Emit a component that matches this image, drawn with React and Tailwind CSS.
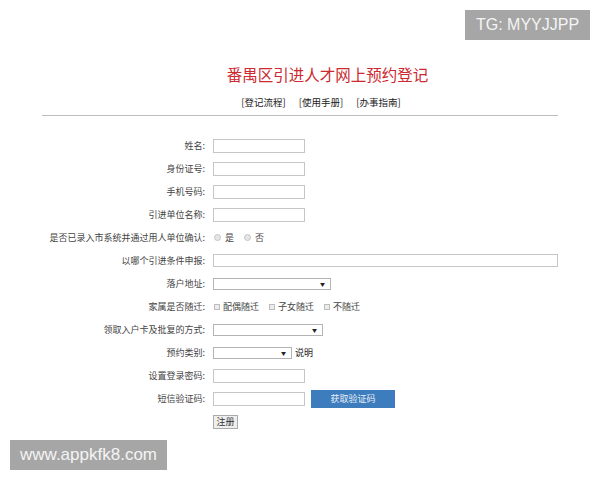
const FONT = { fontFamily: '"Noto Sans CJK SC", "Liberation Sans", sans-serif' };

function TextInput({ w = 'w-[92px]', h = 'h-[14px]' }) {
  return <div className={`${w} ${h} border border-[#c6c6c6] bg-white`} />;
}

function Select({ w }) {
  return (
    <div className={`${w} h-[12px] border border-[#b4b4b4] bg-white flex items-center justify-end pr-[5px]`}>
      <span className="text-[5px] leading-none text-[#222]">▼</span>
    </div>
  );
}

function Radio({ label }) {
  return (
    <div className="flex items-center">
      <span className="w-[7px] h-[7px] rounded-full border border-[#c4c4c4] bg-[#e6e6e6]" />
      <span className="ml-[4px]">{label}</span>
    </div>
  );
}

function Check({ label }) {
  return (
    <div className="flex items-center">
      <span className="w-[6px] h-[6px] border border-[#bdbdbd] bg-[#ececec]" />
      <span className="ml-[3px]">{label}</span>
    </div>
  );
}

function Row({ label, children }) {
  return (
    <div className="flex h-[23px] items-center">
      <div className="w-[205px] text-right">{label ? `${label}:` : ''}</div>
      <div className="ml-[8px] flex items-center flex-1">{children}</div>
    </div>
  );
}

export default function App() {
  return (
    <div className="relative w-[600px] h-[480px] bg-white overflow-hidden text-[#333]" style={FONT}>
      {/* watermark badges */}
      <div className="absolute top-[10px] left-[465px] w-[125px] h-[30px] bg-[#a6a6a6] flex items-center justify-center">
        <span className="text-[16px] text-[#f4f4f4]" style={{ fontFamily: '"Liberation Sans", sans-serif' }}>TG: MYYJJPP</span>
      </div>
      <div className="absolute top-[440px] left-[10px] w-[157px] h-[30px] bg-[#a6a6a6] flex items-center justify-center">
        <span className="text-[17px] text-[#f4f4f4]" style={{ fontFamily: '"Liberation Sans", sans-serif' }}>www.appkfk8.com</span>
      </div>

      {/* header */}
      <div className="pt-[64px]">
        <div className="flex justify-center pl-[55px]">
          <h1 className="text-[15.5px] leading-[20px] text-[#cc2a30]">番禺区引进人才网上预约登记</h1>
        </div>
        <div className="mt-[11px] flex justify-center pl-[42px] gap-[13px] text-[9.5px] leading-[14px] text-[#222]">
          <span>[登记流程]</span>
          <span>[使用手册]</span>
          <span>[办事指南]</span>
        </div>
        <div className="mx-[42px] mt-[6px] border-b border-[#bdbdbd]" />
      </div>

      {/* form */}
      <div className="mt-[18px] text-[9px] leading-none text-[#444]">
        <Row label="姓名"><TextInput /></Row>
        <Row label="身份证号"><TextInput /></Row>
        <Row label="手机号码"><TextInput /></Row>
        <Row label="引进单位名称"><TextInput /></Row>
        <Row label="是否已录入市系统并通过用人单位确认">
          <div className="flex items-center gap-[10px] ml-[1px]">
            <Radio label="是" />
            <Radio label="否" />
          </div>
        </Row>
        <Row label="以哪个引进条件申报"><TextInput w="w-[345px]" h="h-[13px]" /></Row>
        <Row label="落户地址"><Select w="w-[118px]" /></Row>
        <Row label="家属是否随迁">
          <div className="flex items-center gap-[10px] ml-[1px]">
            <Check label="配偶随迁" />
            <Check label="子女随迁" />
            <Check label="不随迁" />
          </div>
        </Row>
        <Row label="领取入户卡及批复的方式"><Select w="w-[110px]" /></Row>
        <Row label="预约类别">
          <Select w="w-[79px]" />
          <span className="ml-[3px] text-[#222]">说明</span>
        </Row>
        <Row label="设置登录密码"><TextInput /></Row>
        <Row label="短信验证码">
          <TextInput />
          <button className="ml-[6px] w-[84px] h-[18px] bg-[#3d7cbd] text-[#e6eef7] text-[9px] leading-none">获取验证码</button>
        </Row>
        <Row label="">
          <button className="w-[25px] h-[14px] bg-[#efefef] border border-[#aaa] text-[9px] leading-none text-[#333]">注册</button>
        </Row>
      </div>
    </div>
  );
}
